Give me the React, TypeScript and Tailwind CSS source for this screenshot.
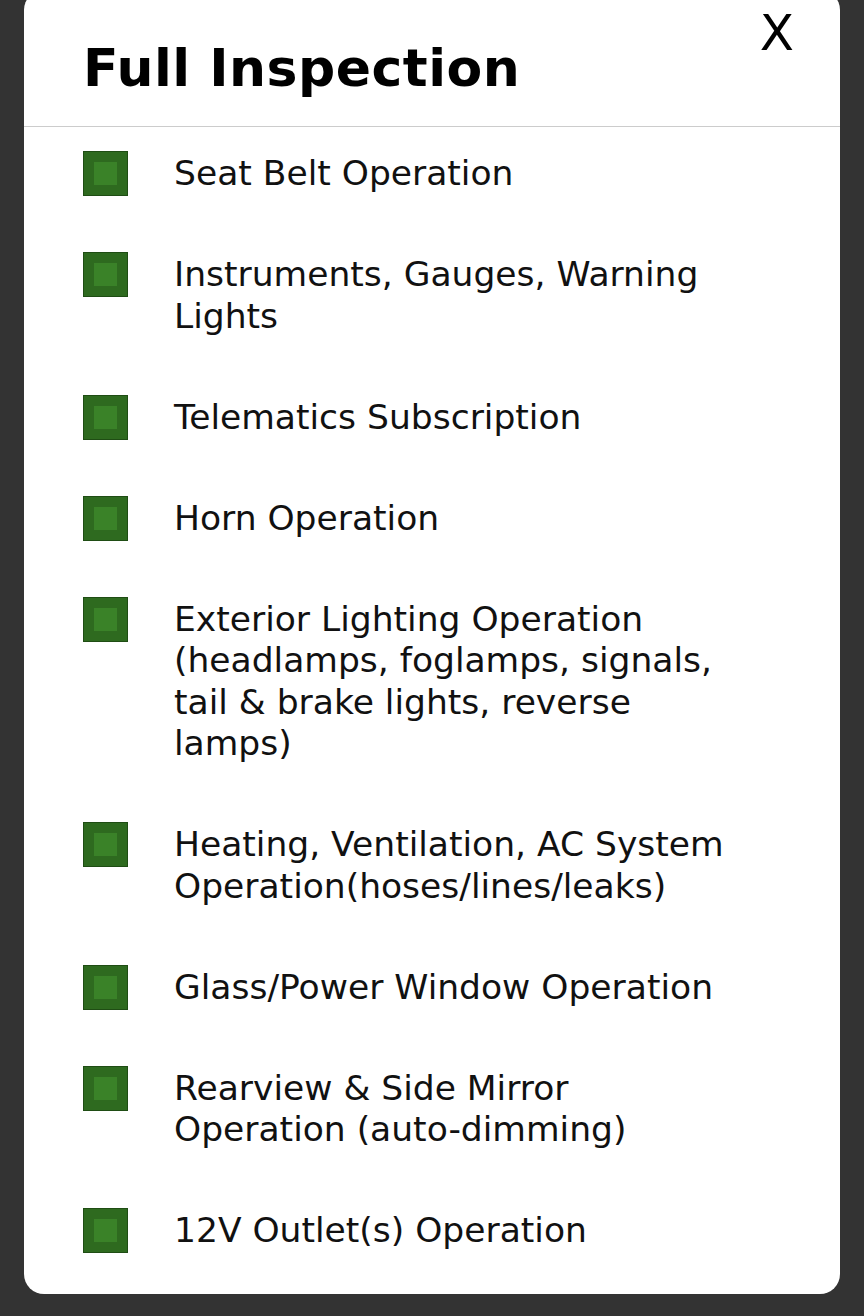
import { FC } from 'react'

const items = [
  'Seat Belt Operation',
  'Instruments, Gauges, Warning Lights',
  'Telematics Subscription',
  'Horn Operation',
  'Exterior Lighting Operation (headlamps, foglamps, signals, tail & brake lights, reverse lamps)',
  'Heating, Ventilation, AC System Operation(hoses/lines/leaks)',
  'Glass/Power Window Operation',
  'Rearview & Side Mirror Operation (auto-dimming)',
  '12V Outlet(s) Operation',
]

const CheckBox: FC = () => (
  <div className="w-[45px] h-[45px] shrink-0 bg-[#2e6a1f] border border-[#1f4d14] flex items-center justify-center">
    <div className="w-[23px] h-[23px] bg-[#3a8228]" />
  </div>
)

const App: FC = () => {
  return (
    <div
      className="h-[1316px] overflow-hidden bg-[#333333] px-[24px]"
      style={{ fontFamily: '"DejaVu Sans", Verdana, sans-serif' }}
    >
      <div className="-mt-[10px] bg-white rounded-[20px] h-[1304px] overflow-hidden">
        <div className="relative border-b border-[#cccccc] pl-[59px] pt-[48px] pb-[28px]">
          <h1 className="text-[52px] leading-[60px] font-bold tracking-[0.5px] text-black">
            Full Inspection
          </h1>
          <button className="absolute right-[46px] top-[18px] text-[50px] leading-[50px] text-black">
            X
          </button>
        </div>
        <div className="pl-[59px] pr-[100px] pt-[24px] flex flex-col gap-[55.5px]">
          {items.map((item) => (
            <div key={item} className="flex items-start gap-[46px]">
              <CheckBox />
              <p className="py-[2px] text-[34.5px] leading-[41.5px] text-[#111111]">{item}</p>
            </div>
          ))}
        </div>
      </div>
    </div>
  )
}

export default App
